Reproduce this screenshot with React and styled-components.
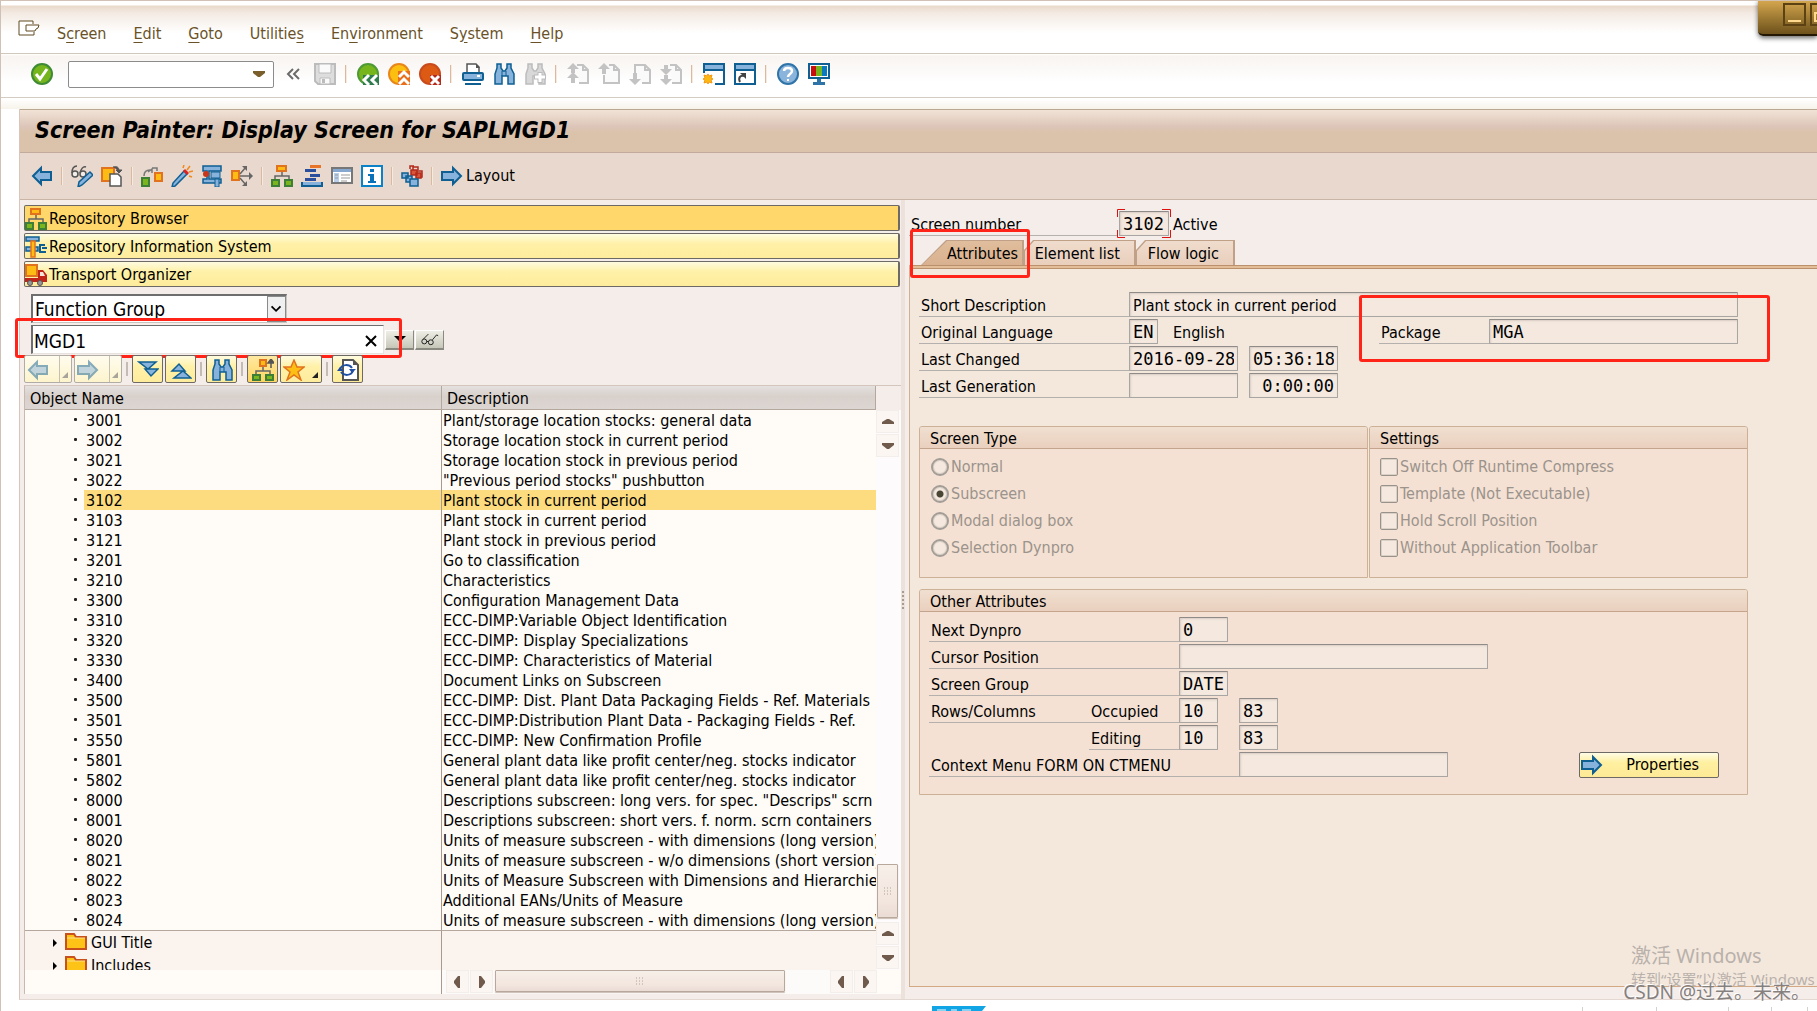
import React from 'react';
import styled, { createGlobalStyle, css } from 'styled-components';

const sans = '"DejaVu Sans Condensed", "DejaVu Sans", "Noto Sans CJK SC", sans-serif';
const mono = '"DejaVu Sans Mono", "Liberation Mono", monospace';
const cjk = '"Noto Sans", "Noto Sans CJK SC", sans-serif';

const GlobalStyle = createGlobalStyle`
  *, *::before, *::after {
    box-sizing: border-box;
  }
  html, body, #root {
    height: 100%;
  }
  body {
    margin: 0;
    overflow: hidden;
    background: #fff;
    color: #000;
    font-family: ${sans};
    font-size: 16px;
    line-height: 20px;
  }
  button, input, select {
    font: inherit;
    color: inherit;
    margin: 0;
    border-radius: 0;
  }
  h1, h2, ul {
    margin: 0;
    padding: 0;
    font: inherit;
  }
  ul {
    list-style: none;
  }
`;

/* ---------- icons ---------- */

const Svg = styled.svg`
  display: block;
  flex: none;
  width: ${({ $w }) => $w || 22}px;
  height: ${({ $h }) => $h || 22}px;
`;

const blue = { fill: '#86b2dc', stroke: '#0f5f92', strokeWidth: 2 };
const green = { fill: '#7ab51d', stroke: '#3d7f37', strokeWidth: 2 };
const orange = { fill: '#fdbb14', stroke: '#e2731e', strokeWidth: 2 };
const pale = { fill: '#c3c3c3' };
const disabledPage = { fill: '#fafafa', stroke: '#c3c3c3', strokeWidth: 2 };

const icons = {
  ok: (
    <>
      <circle cx="11" cy="11" r="10" fill="#76b51b" stroke="#3f8a34" strokeWidth="2" />
      <path d="M5 11l4 5 7-10" fill="none" stroke="#fff" strokeWidth="3" />
    </>
  ),
  history: <path d="M10 6l-5 5 5 5M16 6l-5 5 5 5" fill="none" stroke="#6b6b6b" strokeWidth="2" />,
  save: (
    <>
      <path d="M1 1h20v20H4l-3-3z" fill="#ddd" stroke="#bcbcbc" strokeWidth="2" />
      <path d="M5 1h12v9H5zM6 15h10v6H6z" fill="#fafafa" stroke="#bcbcbc" strokeWidth="1" />
      <path d="M8 16h3v4H8z" fill="#bcbcbc" />
    </>
  ),
  back: (
    <>
      <circle cx="11" cy="11" r="10" fill="#76b51b" stroke="#4f9a35" strokeWidth="2" />
      <path d="M6 12h16v10H6z" fill="#2f7d4c" />
      <path d="M12 12l-5 5 5 5M20 12l-5 5 5 5" fill="none" stroke="#fff" strokeWidth="3" />
    </>
  ),
  exit: (
    <>
      <circle cx="11" cy="11" r="10" fill="#fdbf0f" stroke="#e9861b" strokeWidth="2" />
      <path d="M10 8h12v14H10z" fill="#e9701b" />
      <path d="M11 14l5-5 5 5M11 21l5-5 5 5" fill="none" stroke="#fff" strokeWidth="3" />
    </>
  ),
  cancel: (
    <>
      <circle cx="11" cy="11" r="10" fill="#dc5a14" stroke="#c94a1c" strokeWidth="2" />
      <path d="M11 12h11v10H11z" fill="#b32a1b" />
      <path d="M12 13l8 8M20 13l-8 8" stroke="#fff" strokeWidth="3" />
    </>
  ),
  print: (
    <>
      <path d="M5 9V1h9l3 3v5" fill="#fff" stroke="#555" strokeWidth="1.5" />
      <path d="M14 1v4h4z" fill="#555" />
      <rect x="1" y="10" width="20" height="7" rx="1" {...blue} />
      <path d="M15 13h3" stroke="#fff" strokeWidth="2" />
      <path d="M3 20h16v2H3z" fill="#0f5f92" />
    </>
  ),
  find: (
    <>
      <path d="M4 1h4v4l2 3h2l2-3V1h4v4l3 6v10h-6v-8H9v8H2V11l2-6z" {...blue} strokeWidth="1.5" />
      <path d="M9 8v5M13 8v5" stroke="#0f5f92" strokeWidth="1" />
    </>
  ),
  findNext: (
    <>
      <path d="M4 1h4v4l2 3h2l2-3V1h4v4l3 6v10h-6v-8H9v8H2V11l2-6z" fill="#d8d8d8" stroke="#bcbcbc" strokeWidth="1.5" />
      <path d="M16 9v11M10 14h12" stroke="#bcbcbc" strokeWidth="5" />
      <path d="M16 10v9M11 14h10" stroke="#fff" strokeWidth="3" />
    </>
  ),
  pageFirst: (
    <>
      <path d="M10 2h6l5 5v13H12M16 2v5h5" {...disabledPage} />
      <path d="M6 0l6 6H8v4H4V6H0zM6 9l6 6H8v5H4v-5H0z" {...pale} />
    </>
  ),
  pageUp: (
    <>
      <path d="M11 2h5l5 5v13H6v-8M16 2v5h5" {...disabledPage} />
      <path d="M6 0l6 6H8v5H4V6H0z" {...pale} />
    </>
  ),
  pageDown: (
    <>
      <path d="M6 11V2h10l5 5v13h-8M16 2v5h5" {...disabledPage} />
      <path d="M6 22l6-6H8v-6H4v6H0z" {...pale} />
    </>
  ),
  pageLast: (
    <>
      <path d="M10 2h6l5 5v13H12M16 2v5h5" {...disabledPage} />
      <path d="M4 2h4v4h4l-6 6-6-6h4zM4 12h4v4h4l-6 6-6-6h4z" {...pale} />
    </>
  ),
  newMode: (
    <>
      <path d="M1 1h20v20H12M1 8v2" fill="#fff" stroke="#0f5f92" strokeWidth="2" />
      <rect x="1" y="1" width="20" height="6" {...blue} />
      <path d="M5 11l1 2 3-1-1 3 2 1-2 1 1 3-3-1-1 2-1-2-3 1 1-3-2-1 2-1-1-3 3 1z" fill="#fdb913" stroke="#f39a12" strokeWidth="1" />
    </>
  ),
  shortcut: (
    <>
      <rect x="1" y="1" width="20" height="20" fill="#fff" stroke="#0f5f92" strokeWidth="2" />
      <rect x="1" y="1" width="20" height="6" {...blue} />
      <path d="M6 19c-2-4 0-7 4-6" fill="none" stroke="#444" strokeWidth="2" />
      <path d="M6 10h6v6z" fill="#444" />
    </>
  ),
  help: (
    <>
      <circle cx="11" cy="11" r="10" fill="#8ab4dc" stroke="#2f74a8" strokeWidth="2" />
      <path d="M7 8c0-4 8-4 8 0 0 3-4 3-4 6" fill="none" stroke="#fff" strokeWidth="2.5" />
      <path d="M10 16h2v2h-2z" fill="#fff" />
    </>
  ),
  monitor: (
    <>
      <rect x="1" y="1" width="20" height="14" fill="#fff" stroke="#0f5f92" strokeWidth="2" />
      <path d="M3 3h5v10H3z" fill="#c80f0f" />
      <path d="M8 3h6v10H8z" fill="#76b51b" />
      <path d="M14 3h5v10h-5z" fill="#0a7ac0" />
      <path d="M9 16h4v3h4v3H5v-3h4z" fill="#2f74a8" />
    </>
  ),
  arrowLeft: <path d="M2 11l8-8v4h10v8H10v4z" {...blue} />,
  arrowRight: <path d="M20 11l-8-8v4H1v8h11v4z" {...blue} />,
  display: (
    <>
      <path d="M1 8c0-5 2-7 5-7M9 8c1-4 3-7 6-6" fill="none" stroke="#555" strokeWidth="1.5" />
      <circle cx="4" cy="9" r="3" fill="#f4ece6" stroke="#555" strokeWidth="1.5" />
      <circle cx="12" cy="9" r="3" fill="#f4ece6" stroke="#555" strokeWidth="1.5" />
      <path d="M19 7l3 3-11 10-4 2 1-5z" {...blue} strokeWidth="1.5" />
    </>
  ),
  other: (
    <>
      <path d="M1 3h12v13H1z" {...orange} />
      <path d="M9 9h8l3 3v9H9z" fill="#fff" stroke="#555" strokeWidth="1.5" />
      <path d="M12 2c4-1 6 0 6 4M15 5h6l-3 3z" fill="#555" stroke="#555" strokeWidth="1" />
    </>
  ),
  activate: (
    <>
      <path d="M3 11c0-4 2-6 6-6M7 7l4-3v4M11 3h5v3" fill="none" stroke="#777" strokeWidth="1.5" />
      <path d="M1 13h7v8H1z" {...green} />
      <path d="M14 8h7v8h-7z" {...orange} />
    </>
  ),
  wand: (
    <>
      <path d="M13 6l3 3L4 21l-3 1 1-4z" {...blue} strokeWidth="1.5" />
      <path d="M12 6l4 4 2-2-4-4z" fill="#d22" />
      <path d="M16 5l3-4M18 7l4-1M12 3l1-3M18 11l3 1" stroke="#f08a1a" strokeWidth="1.5" />
    </>
  ),
  whereUsed: (
    <>
      <path d="M2 1h18v5H8v8h12v4H2v-4h4V6H2z" {...blue} strokeWidth="1.5" />
      <path d="M14 14h4v8h-4z" fill="#86b2dc" stroke="#0f5f92" />
      <path d="M10 7h9v6h-9z" fill="#86b2dc" stroke="#0f5f92" />
      <circle cx="5" cy="9" r="3" fill="#c8371b" />
    </>
  ),
  spread: (
    <>
      <path d="M1 6h7v9H1z" {...orange} />
      <path d="M9 11h11M9 9l6-7M9 13l6 7" stroke="#666" strokeWidth="1.5" />
      <path d="M18 7l4 4-4 4zM11 1h5v5zM11 21h5v-5z" fill="#666" />
    </>
  ),
  tree: (
    <>
      <path d="M11 7v4M4 14v-3h14v3" fill="none" stroke="#666" strokeWidth="1.5" />
      <path d="M6 1h9v5H6z" {...orange} />
      <path d="M1 15h7v6H1zM14 15h7v6h-7z" {...green} />
    </>
  ),
  list: (
    <>
      <path d="M9 0h11v3H9z" fill="#e8742a" />
      <path d="M4 4h11v3H4zM9 9h10v3H9zM4 13h11v3H4z" fill="#2b4f9c" />
      <path d="M1 17v4h20v-4" fill="#86b2dc" stroke="#0f5f92" strokeWidth="2" />
    </>
  ),
  screen: (
    <>
      <rect x="1" y="3" width="20" height="15" fill="#fff" stroke="#777" strokeWidth="2" />
      <path d="M2 4h18v3H2z" fill="#86a8d0" />
      <path d="M3 8h5v9H3z" fill="#b8d0ea" />
      <path d="M10 10h9M10 13h9M10 16h6M4 10h3M4 13h3" stroke="#999" strokeWidth="1" />
    </>
  ),
  info: (
    <>
      <rect x="1" y="1" width="20" height="20" fill="#fff" stroke="#0a82c8" strokeWidth="2" />
      <path d="M9 4h4v3H9zM7 9h6v7h2v2H7v-2h2v-5H7z" fill="#0a72b8" />
    </>
  ),
  cubes: (
    <>
      <path d="M15 6h6v6h-4M12 5V2h5v3M9 4V1h4" fill="none" stroke="#b32a1b" strokeWidth="1.5" />
      <path d="M10 5h6v5h-6zM15 8h5v5h-5z" fill="#d8543a" stroke="#b32a1b" strokeWidth="1.5" />
      <path d="M1 8h6v5H1zM5 11h6v6H5z" {...blue} strokeWidth="1.5" />
      <path d="M9 14h8v7H9z" {...blue} strokeWidth="1.5" />
    </>
  ),
  tools: (
    <>
      <path d="M1 1h13v4H1zM1 11h12v4H1z" {...blue} strokeWidth="1.5" />
      <path d="M20 9h-5v7h6M17 12h5" fill="none" stroke="#0f5f92" strokeWidth="2" />
      <path d="M6 5h4v16H6z" {...orange} strokeWidth="1.5" />
    </>
  ),
  truck: (
    <>
      <path d="M1 1h11v11H1z" {...orange} />
      <path d="M0 14h13V6h5l4 5v7H0z" fill="#c02418" />
      <path d="M15 8h3l2 4h-5z" fill="#f4e4dc" />
      <circle cx="5" cy="19" r="2.5" fill="#999" stroke="#555" />
      <circle cx="15" cy="19" r="2.5" fill="#999" stroke="#555" />
    </>
  ),
  expand: <path d="M2 3h17l-8 7zM8 10h13l-7 7z" {...blue} strokeWidth="1.5" />,
  collapse: <path d="M2 12h13L9 5zM4 19h17l-8-7z" {...blue} strokeWidth="1.5" />,
  treeUp: (
    <>
      <path d="M11 8v4M4 15v-3h14v3" fill="none" stroke="#666" strokeWidth="1.5" />
      <path d="M8 1h6v6H8z" {...orange} />
      <path d="M1 16h7v5H1zM14 16h7v5h-7z" {...green} />
      <path d="M19 9V3M16 4l3-4 3 4z" stroke="#555" strokeWidth="1.5" fill="#555" />
    </>
  ),
  star: <path d="M11 1l3 7h7l-6 5 3 8-7-5-7 5 3-8-6-5h7z" fill="#fdbf14" stroke="#e2731e" strokeWidth="1.5" />,
  refresh: (
    <>
      <path d="M6 1h10l5 5v15H6z" fill="#fff" stroke="#555" strokeWidth="2" />
      <path d="M16 1v5h5z" fill="#555" />
      <path d="M3 10c2-5 9-5 12-1M16 12c-2 5-9 5-12 1" fill="none" stroke="#1f4fa0" strokeWidth="2" />
      <path d="M12 10h7l-4 4zM0 12h7L3 8z" fill="#1f4fa0" />
    </>
  ),
  folder: (
    <>
      <path d="M1 17V2h8l2 3h10v12z" fill="#fdc417" stroke="#c8501a" strokeWidth="2" />
      <path d="M2 6h18" stroke="#fde08a" strokeWidth="1" />
    </>
  ),
  window: <path d="M15 4V1H1v14h15v-3M21 5H8v6h9l1-2 2-1 1-3z" fill="#fff" stroke="#5f4a20" strokeWidth="1" />,
  glasses: (
    <>
      <circle cx="4" cy="14" r="3" fill="none" stroke="#000" />
      <circle cx="12" cy="15" r="3" fill="none" stroke="#000" />
      <path d="M3 11l6-6M14 12l5-6 2 1M7 14h2" fill="none" stroke="#000" />
    </>
  )
};

function Icon ({ name, w = 22, h = 22 }) {
  return <Svg $w={w} $h={h} viewBox="0 0 22 22" aria-hidden="true">{icons[name]}</Svg>;
}

/* ---------- top of the window ---------- */

const Page = styled.div`
  position: relative;
  display: flex;
  flex-direction: column;
  height: 100%;
  overflow: hidden;
  border-top: 1px solid #d2c2b6;
  border-left: 1px solid #cfc0b8;
  background: #fff;
`;

const MenuBar = styled.nav`
  display: flex;
  align-items: center;
  gap: 17px;
  height: 53px;
  padding: 13px 0 0 17px;
  border-bottom: 1px solid #cfc9bd;
  background: linear-gradient(#fff 0, #fff 4px, #ead9cb 5px, #f3eae2 12px, #fff 32px);
`;

const MenuList = styled.ul`
  display: flex;
  gap: 27px;
`;

const MenuItem = styled.button`
  display: block;
  padding: 0;
  border: 0;
  background: none;
  color: #6a5228;

  u {
    text-underline-offset: 3px;
  }
`;

const MenuIcon = styled.span`
  padding-bottom: 6px;
`;

const menus = [
  ['S', 'c', 'reen'],
  ['', 'E', 'dit'],
  ['', 'G', 'oto'],
  ['Utilitie', 's', ''],
  ['En', 'v', 'ironment'],
  ['S', 'y', 'stem'],
  ['', 'H', 'elp']
];

const Toolbar = styled.div`
  display: flex;
  align-items: center;
  gap: ${({ $gap }) => $gap}px;
`;

const MainToolbar = styled(Toolbar)`
  height: 44px;
  padding: 0 0 3px 30px;
  border-bottom: 1px solid #d2ccc2;
  background: linear-gradient(#fff 0, #f8f4f1 2px, #fff 28px);
`;

const IconButton = styled.button`
  display: flex;
  align-items: center;
  gap: 3px;
  padding: 0;
  border: 0;
  background: none;
`;

const Separator = styled.span`
  width: 2px;
  height: 18px;
  margin-right: ${({ $wide }) => ($wide ? 1 : 0)}px;
  border-left: 1px solid #dbb8a0;
  border-right: 1px solid #f6eadc;
`;

const Command = styled.div`
  display: flex;
  align-items: center;
  width: 206px;
  height: 27px;
  margin-left: 6px;
  padding-right: 8px;
  border: 1px solid #8c8c8c;
  border-radius: 2px;
  background: #fff;

  input {
    flex: 1;
    min-width: 0;
    border: 0;
    outline: 0;
    background: none;
  }
`;

function Tools ({ names, wide }) {
  return names.map((name, i) => (
    name === '|'
      ? <Separator key={i} $wide={wide} />
      : <IconButton key={i} aria-label={name}><Icon name={name} /></IconButton>
  ));
}

const mainTools = ['history', 'save', '|', 'back', 'exit', 'cancel', '|', 'print', 'find', 'findNext', '|',
  'pageFirst', 'pageUp', 'pageDown', 'pageLast', '|', 'newMode', 'shortcut', '|', 'help', 'monitor'];

const appTools = ['arrowLeft', '|', 'display', 'other', '|', 'activate', 'wand', 'whereUsed', 'spread', '|',
  'tree', 'list', 'screen', 'info', '|', 'cubes', '|'];

const WindowControls = styled.div`
  position: absolute;
  top: -1px;
  right: 0;
  display: flex;
  gap: 4px;
  width: 59px;
  height: 36px;
  padding: 3px 0 0 25px;
  overflow: hidden;
  border-bottom: 2px solid #241804;
  border-radius: 0 0 0 5px;
  background: linear-gradient(#d8a850, #a07c34 50%, #6e521c);
  box-shadow: 0 2px 5px rgba(0, 0, 0, .6);

  button {
    flex: none;
    width: 23px;
    height: 23px;
    padding: 0;
    border: 2px solid #5c4212;
    background: none;
  }
`;

/* ---------- frame ---------- */

const Frame = styled.main`
  flex: 1;
  min-height: 0;
  display: flex;
  flex-direction: column;
  margin: 0 0 11px 18px;
  border-left: 1px solid #d8c6ba;
  border-bottom: 1px solid #e4d8d2;
  background: #f5edea;
`;

const Gap = styled.div`
  height: 11px;
  background: linear-gradient(#fff 1px, #f7f3ea);
`;

const TitleBar = styled.h1`
  height: 44px;
  padding-left: 15px;
  border-top: 1px solid #b9a892;
  border-bottom: 1px solid #c2ab9c;
  background: linear-gradient(#f1e3d6, #dcc5b8 40%, #dbc2aa 55%, #dbc2aa);
  font-size: 23px;
  font-weight: bold;
  font-style: italic;
  line-height: 40px;
`;

const AppToolbar = styled(Toolbar)`
  height: 47px;
  padding-left: 11px;
  border-bottom: 1px solid #c9b4a6;
  background: #e8d8ce;
`;

const Columns = styled.div`
  flex: 1;
  min-height: 0;
  display: grid;
  grid-template-columns: minmax(0, 881fr) 4px minmax(0, 912fr);
`;

const Splitter = styled.div`
  display: flex;
  align-items: center;
  justify-content: center;
  background: #ede2db;

  &::before {
    content: '';
    height: 18px;
    border-left: 2px dotted #a89c90;
  }
`;

/* ---------- left side: object navigator ---------- */

const Navigator = styled.section`
  display: flex;
  flex-direction: column;
  min-width: 0;
  min-height: 0;
  padding: 5px 0 5px 4px;
`;

const Areas = styled.div`
  display: grid;
  gap: 2px;
  padding-right: 1px;
`;

const AreaButton = styled.button`
  display: flex;
  align-items: center;
  gap: 2px;
  height: 26px;
  padding: 1px 0 0;
  border: 1px solid #6d6a66;
  border-width: 1px 2px 1px 1px;
  border-radius: 2px;
  background: ${({ $active }) => ($active ? '#ffd76a' : 'linear-gradient(#fffbe0, #fff1a8 40%, #feec9c)')};
  text-align: left;
`;

const Finder = styled.div`
  position: relative;
  display: grid;
  gap: 2px;
  padding: 7px 0 1px 7px;
`;

const SelectBox = styled.div`
  position: relative;
  width: 256px;
  height: 29px;
  border: 1px solid #c8c4c0;
  border-top: 2px solid #6e6e6e;
  border-left: 2px solid #6e6e6e;
  background: #fff;

  select {
    width: 100%;
    height: 26px;
    padding: 0 0 0 2px;
    border: 0;
    background: none;
    appearance: none;
    font-size: 19px;
    line-height: 26px;
  }
  svg {
    position: absolute;
    top: 0;
    right: 0;
    width: 19px;
    height: 26px;
    border: 1px solid #8a8a8a;
    background: #f0f0f0;
    pointer-events: none;
  }
`;

const ObjectRow = styled.div`
  display: flex;
  align-items: center;
  gap: 1px;
`;

const ObjectBox = styled.div`
  display: flex;
  align-items: center;
  width: 353px;
  height: 29px;
  padding: 2px 5px 0 0;
  border: 1px solid #e6e2de;
  border-top: 1px solid #6e6e6e;
  border-left: 2px solid #6e6e6e;
  background: #fff;

  input {
    flex: 1;
    min-width: 0;
    padding: 0 1px;
    border: 0;
    outline: 0;
    background: none;
    font-size: 19px;
  }
  button {
    padding: 0;
    border: 0;
    background: none;
  }
`;

const GrayButton = styled.button`
  display: flex;
  align-items: center;
  justify-content: center;
  width: 29px;
  height: 20px;
  padding: 0;
  border: 1px solid #fff;
  border-right: 1px solid #8a8a80;
  border-bottom: 2px solid #8a8a80;
  background: linear-gradient(#eeeee6, #c6c6b8);
`;

const Mark = styled.div`
  position: absolute;
  border: 3px solid #ff2318;
  border-radius: 3px;
  pointer-events: none;
`;

const FinderMark = styled(Mark)`
  top: 31px;
  left: -9px;
  width: 387px;
  height: 40px;
`;

const TreeToolbar = styled.div`
  display: flex;
  align-items: flex-end;
  gap: 2px;
  height: 28px;
`;

const TreeButton = styled.button`
  display: flex;
  align-items: center;
  justify-content: ${({ $menu }) => ($menu ? 'flex-start' : 'center')};
  position: relative;
  width: ${({ $menu }) => $menu || 31}px;
  height: 28px;
  padding: 1px ${({ $menu }) => ($menu ? 2 : 3)}px 0;
  border: 1px solid #6d6a66;
  border-radius: 2px;
  background: ${({ $active }) => ($active
    ? 'linear-gradient(#ffe9a0, #ffd562)'
    : 'linear-gradient(#fffbe0, #fff1a8 40%, #feec9c)')};

  &:disabled {
    border-color: #b0aca6;
    background: linear-gradient(90deg, transparent 34px, #c4c0b4 34px, #c4c0b4 35px, transparent 35px),
      linear-gradient(#fffcee, #fdf4cc);
  }
  &:disabled svg {
    opacity: .5;
  }
  ${({ $menu }) => $menu && css`
    &::after {
      content: '';
      position: absolute;
      right: 3px;
      bottom: 4px;
      border: 3px solid;
      border-color: transparent #222 #222 transparent;
    }
    &:disabled::after {
      border-color: transparent #a8a49c #a8a49c transparent;
    }
  `}
`;

const TreeSeparator = styled.span`
  width: 2px;
  height: 14px;
  margin: 0 2px 7px;
  background: #c4bcb4;
`;

const TreeBox = styled.div`
  flex: 1;
  min-height: 0;
  display: grid;
  grid-template-columns: minmax(0, 1fr) 25px;
  grid-template-rows: minmax(0, 1fr) 24px;
  margin-top: 2px;
  border-top: 1px solid #d4c6bc;
  border-left: 1px solid #c8bab0;
`;

const TreeClip = styled.div`
  overflow: hidden;
  background: #fbf3ee;
`;

const Tree = styled.table`
  width: 100%;
  border-collapse: separate;
  border-spacing: 0;
  table-layout: fixed;

  th {
    height: 24px;
    padding: 2px 5px 0;
    border-right: 1px solid #b4a89e;
    border-bottom: 1px solid #b4a89e;
    background: linear-gradient(#e4e1df, #d8d0cb 45%, #dcd6d2);
    font-weight: normal;
    line-height: 20px;
    text-align: left;
  }
  td {
    height: 20px;
    padding: 2px 0 0 1px;
    overflow: hidden;
    line-height: 18px;
    white-space: nowrap;
  }
  td:first-child {
    border-right: 1px solid #a89a90;
  }
`;

const NameColumn = styled.col`
  width: 417px;
`;

const ScreenRow = styled.tr`
  background: #fffbf6;

  td {
    background: ${({ $active }) => ($active ? '#fddc80' : 'none')};
  }
  td:first-child {
    padding-left: 49px;
    background: ${({ $active }) => ($active
    ? 'linear-gradient(90deg, #fffbf6 59px, #fddc80 59px)'
    : 'none')};
  }
  td:first-child::before {
    content: '';
    display: inline-block;
    width: 3px;
    height: 3px;
    margin-right: 9px;
    vertical-align: 5px;
    border-radius: 1px;
    background: #222;
  }
`;

const FolderRow = styled.tr`
  && td {
    height: 24px;
    padding-top: 0;
    border-top: ${({ $first }) => ($first ? '1px solid #b4a89e' : '0')};
  }
`;

const Folder = styled.span`
  display: flex;
  align-items: center;
  gap: 4px;
  padding-left: 27px;

  &::before {
    content: '';
    margin-right: 4px;
    border: 4px solid transparent;
    border-left-color: #000;
    border-right: 0;
  }
`;

const ScrollBar = styled.div`
  display: flex;
  gap: 1px;
  background: #fdfbfa;
`;

const VerticalBar = styled(ScrollBar)`
  flex-direction: column;
  padding: 24px 0 1px;
  background: linear-gradient(#f5edea 24px, #fdfbfb 24px);
`;

const ScrollButton = styled.button`
  display: flex;
  flex: none;
  align-items: center;
  justify-content: center;
  width: 23px;
  height: 23px;
  padding: 0;
  border: 1px solid #f4eeea;
  background: #fbf6f2;
`;

const Spacer = styled.span`
  flex: ${({ $grow }) => $grow || 1};
`;

const Thumb = styled.div`
  flex: ${({ $grow }) => $grow || 'none'};
  display: flex;
  align-items: center;
  justify-content: center;
  width: ${({ $grow }) => ($grow ? 'auto' : '21px')};
  height: ${({ $grow }) => ($grow ? '22px' : '54px')};
  margin: 0 1px;
  border: 1px solid #b8a89c;
  border-radius: 1px;
  background: linear-gradient(#f7efe9, #f3e6de 70%, #eadcd4);
  box-shadow: 0 1px 1px #cbbdb4;
`;

const BottomBar = styled.div`
  grid-column: 1 / 3;
  display: grid;
  grid-template-columns: 416px 1fr;
  background: #fffbf6;
`;

const HorizontalBar = styled(ScrollBar)`
  margin-right: 24px;
  padding-left: 4px;
  border-left: 1px solid #a89a90;
`;

const arrows = {
  up: 'M5 13h12v-2l-5-3h-2l-5 3z',
  down: 'M5 8h12v2l-5 4h-2l-5-4z',
  left: 'M13 5v12h-2l-4-5v-2l4-5z',
  right: 'M8 5v12h2l4-5v-2l-4-5z'
};

function Scroll ({ dir }) {
  return (
    <ScrollButton aria-label={`scroll ${dir}`}>
      <Svg viewBox="0 0 22 22"><path d={arrows[dir]} fill="#705a4c" /></Svg>
    </ScrollButton>
  );
}

function Grip () {
  return (
    <Svg $w={8} $h={8} viewBox="0 0 8 8">
      <path d="M0 1h8M0 4h8M0 7h8" stroke="#b0a298" strokeWidth="1" strokeDasharray="1 2" />
    </Svg>
  );
}

const screens = [
  ['3001', 'Plant/storage location stocks: general data'],
  ['3002', 'Storage location stock in current period'],
  ['3021', 'Storage location stock in previous period'],
  ['3022', '"Previous period stocks" pushbutton'],
  ['3102', 'Plant stock in current period'],
  ['3103', 'Plant stock in current period'],
  ['3121', 'Plant stock in previous period'],
  ['3201', 'Go to classification'],
  ['3210', 'Characteristics'],
  ['3300', 'Configuration Management Data'],
  ['3310', 'ECC-DIMP:Variable Object Identification'],
  ['3320', 'ECC-DIMP: Display Specializations'],
  ['3330', 'ECC-DIMP: Characteristics of Material'],
  ['3400', 'Document Links on Subscreen'],
  ['3500', 'ECC-DIMP: Dist. Plant Data Packaging Fields - Ref. Materials'],
  ['3501', 'ECC-DIMP:Distribution Plant Data - Packaging Fields - Ref.'],
  ['3550', 'ECC-DIMP: New Confirmation Profile'],
  ['5801', 'General plant data like profit center/neg. stocks indicator'],
  ['5802', 'General plant data like profit center/neg. stocks indicator'],
  ['8000', 'Descriptions subscreen: long vers. for spec. "Descrips" scrn'],
  ['8001', 'Descriptions subscreen: short vers. f. norm. scrn containers'],
  ['8020', 'Units of measure subscreen - with dimensions (long version)'],
  ['8021', 'Units of measure subscreen - w/o dimensions (short version)'],
  ['8022', 'Units of Measure Subscreen with Dimensions and Hierarchies'],
  ['8023', 'Additional EANs/Units of Measure'],
  ['8024', 'Units of measure subscreen - with dimensions (long version)']
];

function ObjectNavigator () {
  return (
    <Navigator>
      <Areas>
        <AreaButton $active><Icon name="tree" />Repository Browser</AreaButton>
        <AreaButton><Icon name="tools" />Repository Information System</AreaButton>
        <AreaButton><Icon name="truck" />Transport Organizer</AreaButton>
      </Areas>
      <Finder>
        <SelectBox>
          <select aria-label="Object type" defaultValue="fg">
            <option value="fg">Function Group</option>
          </select>
          <Svg viewBox="0 0 19 26"><path d="M4 10l5 5 5-5" fill="none" stroke="#000" strokeWidth="2" /></Svg>
        </SelectBox>
        <ObjectRow>
          <ObjectBox>
            <input aria-label="Object name" defaultValue="MGD1" />
            <button aria-label="Clear">
              <Svg $w={14} $h={14} viewBox="0 0 14 14"><path d="M2 2l10 10M12 2L2 12" stroke="#000" strokeWidth="2" /></Svg>
            </button>
          </ObjectBox>
          <GrayButton aria-label="History">
            <Svg $w={12} $h={6} viewBox="0 0 12 6"><path d="M0 0h12L6 6z" fill="#000" /></Svg>
          </GrayButton>
          <GrayButton aria-label="Display"><Icon name="glasses" w={18} h={18} /></GrayButton>
        </ObjectRow>
        <FinderMark />
      </Finder>
      <TreeToolbar>
        <TreeButton $menu={48} disabled aria-label="Back"><Icon name="arrowLeft" /></TreeButton>
        <TreeButton $menu={48} disabled aria-label="Forward"><Icon name="arrowRight" /></TreeButton>
        <TreeSeparator />
        <TreeButton aria-label="Expand"><Icon name="expand" /></TreeButton>
        <TreeButton aria-label="Collapse"><Icon name="collapse" /></TreeButton>
        <TreeSeparator />
        <TreeButton aria-label="Find"><Icon name="find" /></TreeButton>
        <TreeSeparator />
        <TreeButton $active aria-label="Superior object list"><Icon name="treeUp" /></TreeButton>
        <TreeButton $menu={42} aria-label="Favorites"><Icon name="star" /></TreeButton>
        <TreeSeparator />
        <TreeButton aria-label="Refresh"><Icon name="refresh" /></TreeButton>
      </TreeToolbar>
      <TreeBox>
        <TreeClip>
          <Tree>
            <colgroup><NameColumn /><col /></colgroup>
            <thead>
              <tr><th>Object Name</th><th>Description</th></tr>
            </thead>
            <tbody>
              {screens.map(([id, text]) => (
                <ScreenRow key={id} $active={id === '3102'}><td>{id}</td><td>{text}</td></ScreenRow>
              ))}
              <FolderRow $first><td><Folder><Icon name="folder" />GUI Title</Folder></td><td /></FolderRow>
              <FolderRow><td><Folder><Icon name="folder" />Includes</Folder></td><td /></FolderRow>
            </tbody>
          </Tree>
        </TreeClip>
        <VerticalBar>
          <Scroll dir="up" />
          <Scroll dir="down" />
          <Spacer />
          <Thumb><Grip /></Thumb>
          <Spacer $grow="0 0 2px" />
          <Scroll dir="up" />
          <Scroll dir="down" />
        </VerticalBar>
        <BottomBar>
          <span />
          <HorizontalBar>
            <Scroll dir="left" />
            <Scroll dir="right" />
            <Thumb $grow={291}><Grip /></Thumb>
            <Spacer $grow={42} />
            <Scroll dir="left" />
            <Scroll dir="right" />
          </HorizontalBar>
        </BottomBar>
      </TreeBox>
    </Navigator>
  );
}

/* ---------- right side: screen attributes ---------- */

const Details = styled.section`
  position: relative;
  display: flex;
  flex-direction: column;
  min-width: 0;
  padding: 8px 0 12px 4px;
`;

const Line = styled.div`
  display: flex;
  align-items: stretch;
  height: 25px;
  margin-bottom: 2px;
`;

const Label = styled.label`
  flex: none;
  width: ${({ $w }) => $w}px;
  padding: 2px 0 0 2px;
  border-bottom: 1px solid #b4b0ae;
  line-height: 24px;
  white-space: nowrap;
`;

const Field = styled.input`
  flex: none;
  width: ${({ $w }) => $w}px;
  height: 25px;
  margin-left: ${({ $gap }) => $gap || 0}px;
  padding: ${({ $text }) => ($text ? 2 : 0)}px 3px 0;
  border: 1px solid #a9a5a3;
  border-top-color: #8f8b89;
  border-radius: 1px;
  outline: 0;
  background: #f4e8df;
  box-shadow: inset 1px 1px 2px #d8ccc4;
  font-family: ${({ $text }) => ($text ? sans : mono)};
  font-size: ${({ $text }) => ($text ? 16 : 17)}px;
  text-align: ${({ $right }) => ($right ? 'right' : 'left')};
`;

const WideField = styled(Field)`
  flex: 1;
`;

const Note = styled.span`
  padding: 2px 0 0 ${({ $gap }) => $gap || 0}px;
  line-height: 24px;
`;

const Dynpro = styled(Line)`
  margin-top: 3px;
`;

const Focused = styled.span`
  position: relative;
  display: flex;
  margin-left: 2px;

  svg {
    position: absolute;
    top: -2px;
    left: -2px;
    width: 54px;
    height: 30px;
    pointer-events: none;
  }
`;

const Tabs = styled.div`
  display: flex;
  align-items: flex-end;
  height: 27px;
`;

const tabShapes = {
  long: 'polygon(0 100%, 12px 100%, 37px 0, 100% 0, 100% 100%)',
  short: 'polygon(0 100%, 0 10px, 9px 0, 100% 0, 100% 100%)'
};

const Tab = styled.button`
  position: relative;
  z-index: 0;
  width: ${({ $w }) => $w}px;
  height: 25px;
  padding: 3px ${({ $active }) => ($active ? 6 : 16)}px 0 0;
  border: 0;
  clip-path: ${({ $active }) => ($active ? tabShapes.long : tabShapes.short)};
  background: #c0a188;
  text-align: right;

  &::before {
    content: '';
    position: absolute;
    z-index: -1;
    inset: 1px 2px 0 1px;
    clip-path: ${({ $active }) => ($active ? tabShapes.long : tabShapes.short)};
    background: ${({ $active }) => ($active
    ? 'linear-gradient(#e0bd9c, #d9b190)'
    : 'linear-gradient(#f0dccd, #e9cfbc)')};
  }
`;

const Panel = styled.div`
  flex: 1;
  min-height: 0;
  border-left: 1px solid #cfb096;
  border-bottom: 1px solid #d3a984;
  background: #f4e8dd;

  &::before {
    content: '';
    display: block;
    height: 4px;
    border: 1px solid #bb906c;
    border-width: 1px 0;
    background: #e2bd98;
  }
`;

const PanelBody = styled.div`
  padding: 23px 69px 0 9px;
`;

const Spread = styled.div`
  display: flex;
  justify-content: space-between;
`;

const Head = styled.div`
  padding-right: 10px;
`;

const Groups = styled.div`
  display: grid;
  grid-template-columns: 449fr 379fr;
  gap: 11px 1px;
  margin-top: 28px;
`;

const Group = styled.section`
  grid-column: ${({ $full }) => ($full ? '1 / 3' : 'auto')};
  border: 1px solid #cdb196;
  border-radius: 3px 3px 0 0;
  background: #f4e1d3;
`;

const GroupTitle = styled.h2`
  height: 22px;
  padding-left: 10px;
  border-bottom: 1px solid #c4a48c;
  border-radius: 2px 2px 0 0;
  background: linear-gradient(#f0dfd0, #ead0be);
  line-height: 24px;
`;

const GroupBody = styled.div`
  padding: ${({ $pad }) => $pad};
`;

const Choice = styled.label`
  display: flex;
  align-items: center;
  gap: 2px;
  height: 27px;
  color: #9b938c;

  input {
    appearance: none;
    flex: none;
    width: 18px;
    height: 18px;
    border: 1px solid #98928c;
    border-radius: 2px;
    background: #f4e8df;
    box-shadow: inset 0 0 0 1px #dcd0c4;
  }
  input[type='radio'] {
    border: 2px solid #a39d97;
    border-radius: 50%;
  }
  input[type='radio']:checked {
    background: radial-gradient(#4a4634 3px, #f4e8df 4px);
  }
`;

const Indent = styled.span`
  flex: none;
  width: 160px;
`;

const PropertiesButton = styled.button`
  display: flex;
  align-items: center;
  justify-content: space-between;
  width: 140px;
  height: 26px;
  margin-left: auto;
  padding: 0 19px 0 1px;
  border: 1px solid #6d6a66;
  border-radius: 2px;
  background: linear-gradient(#fffce6, #fff0a0 40%, #feea96);
`;

const TabMark = styled(Mark)`
  top: 29px;
  left: 5px;
  width: 120px;
  height: 49px;
`;

const PackageMark = styled(Mark)`
  top: 95px;
  right: 47px;
  width: 411px;
  height: 67px;
`;

function DynproLine () {
  return (
    <Dynpro>
      <Label htmlFor="dynnr" $w={208}>Screen number</Label>
      <Focused>
        <Field id="dynnr" $w={50} readOnly defaultValue="3102" />
        <svg viewBox="0 0 54 30">
          <path d="M8 .5H.5V8M45 .5h8.500V8M8 28.500H.5V21M45 28.500h8.500V21" fill="none" stroke="#e01010" strokeWidth="1" />
        </svg>
      </Focused>
      <Note $gap={4}>Active</Note>
    </Dynpro>
  );
}

function HeadLines () {
  return (
    <Head>
      <Line>
        <Label htmlFor="text" $w={210}>Short Description</Label>
        <WideField id="text" $text readOnly defaultValue="Plant stock in current period" />
      </Line>
      <Spread>
        <Line>
          <Label htmlFor="lang" $w={210}>Original Language</Label>
          <Field id="lang" $w={29} readOnly defaultValue="EN" />
          <Note $gap={15}>English</Note>
        </Line>
        <Line>
          <Label htmlFor="pack" $w={110}>Package</Label>
          <Field id="pack" $w={249} readOnly defaultValue="MGA" />
        </Line>
      </Spread>
      <Line>
        <Label htmlFor="changed" $w={210}>Last Changed</Label>
        <Field id="changed" $w={109} readOnly defaultValue="2016-09-28" />
        <Field aria-label="Time changed" $w={89} $gap={11} $right readOnly defaultValue="05:36:18" />
      </Line>
      <Line>
        <Label htmlFor="generated" $w={210}>Last Generation</Label>
        <Field id="generated" $w={109} readOnly defaultValue="" />
        <Field aria-label="Time generated" $w={89} $gap={11} $right readOnly defaultValue="0:00:00" />
      </Line>
    </Head>
  );
}

function OtherAttributes () {
  return (
    <GroupBody $pad="5px 28px 15px 9px">
      <Line>
        <Label htmlFor="next" $w={250}>Next Dynpro</Label>
        <Field id="next" $w={49} readOnly defaultValue="0" />
      </Line>
      <Line>
        <Label htmlFor="cursor" $w={250}>Cursor Position</Label>
        <Field id="cursor" $w={309} readOnly defaultValue="" />
      </Line>
      <Line>
        <Label htmlFor="group" $w={250}>Screen Group</Label>
        <Field id="group" $w={49} readOnly defaultValue="DATE" />
      </Line>
      <Line>
        <Label as="span" $w={160}>Rows/Columns</Label>
        <Label htmlFor="occupied" $w={90}>Occupied</Label>
        <Field id="occupied" $w={39} readOnly defaultValue="10" />
        <Field aria-label="Occupied columns" $w={39} $gap={21} readOnly defaultValue="83" />
      </Line>
      <Line>
        <Indent />
        <Label htmlFor="editing" $w={90}>Editing</Label>
        <Field id="editing" $w={39} readOnly defaultValue="10" />
        <Field aria-label="Editing columns" $w={39} $gap={21} readOnly defaultValue="83" />
      </Line>
      <Line>
        <Label htmlFor="ctmenu" $w={310}>Context Menu FORM ON CTMENU</Label>
        <Field id="ctmenu" $w={209} readOnly defaultValue="" />
        <PropertiesButton><Icon name="arrowRight" />Properties</PropertiesButton>
      </Line>
    </GroupBody>
  );
}

const screenTypes = ['Normal', 'Subscreen', 'Modal dialog box', 'Selection Dynpro'];
const settings = ['Switch Off Runtime Compress', 'Template (Not Executable)', 'Hold Scroll Position', 'Without Application Toolbar'];

function ScreenDetails () {
  return (
    <Details>
      <DynproLine />
      <Tabs>
        <Tab $w={115} $active>Attributes</Tab>
        <Tab $w={112}>Element list</Tab>
        <Tab $w={99}>Flow logic</Tab>
      </Tabs>
      <Panel>
        <PanelBody>
          <HeadLines />
          <Groups>
            <Group>
              <GroupTitle>Screen Type</GroupTitle>
              <GroupBody $pad="4px 11px 16px">
                {screenTypes.map((type) => (
                  <Choice key={type}>
                    <input type="radio" name="type" disabled defaultChecked={type === 'Subscreen'} />{type}
                  </Choice>
                ))}
              </GroupBody>
            </Group>
            <Group>
              <GroupTitle>Settings</GroupTitle>
              <GroupBody $pad="4px 10px 16px">
                {settings.map((s) => <Choice key={s}><input type="checkbox" disabled />{s}</Choice>)}
              </GroupBody>
            </Group>
            <Group $full>
              <GroupTitle>Other Attributes</GroupTitle>
              <OtherAttributes />
            </Group>
          </Groups>
        </PanelBody>
      </Panel>
      <TabMark />
      <PackageMark />
    </Details>
  );
}

/* ---------- bottom edge ---------- */

const Watermark = styled.div`
  position: absolute;
  right: 0;
  bottom: 21px;
  width: 186px;
  color: #b9b1ab;
  font-family: ${cjk};
  font-size: 15px;
  line-height: 22px;
  white-space: nowrap;

  strong {
    display: block;
    font-size: 20px;
    font-weight: normal;
    line-height: 24px;
  }
`;

const Credit = styled.div`
  position: absolute;
  right: 7px;
  bottom: 6px;
  color: #85807e;
  font-family: ${cjk};
  font-size: 19px;
  line-height: 26px;
  white-space: nowrap;
  text-shadow: -1px -1px 0 #fff;
`;

const SapLogo = styled.svg`
  position: absolute;
  left: 51.25%;
  bottom: 0;
  width: 54px;
  height: 5px;
`;

const StatusMarks = styled.div`
  position: absolute;
  right: 9px;
  bottom: 0;
  display: grid;
  grid-template-columns: 74px 72px 43px 36px 1px;
  height: 4px;

  span {
    border-left: 1px solid #d4d0ce;
  }
`;

export default function App () {
  return (
    <Page>
      <GlobalStyle />
      <MenuBar>
        <MenuIcon><Icon name="window" /></MenuIcon>
        <MenuList>
          {menus.map(([a, key, b]) => (
            <li key={a + key + b}><MenuItem>{a}<u>{key}</u>{b}</MenuItem></li>
          ))}
        </MenuList>
      </MenuBar>
      <MainToolbar $gap={9}>
        <IconButton aria-label="Enter"><Icon name="ok" /></IconButton>
        <Command>
          <input aria-label="Command" />
          <Svg $w={12} $h={7} viewBox="0 0 12 7"><path d="M0 0h12v2L7 6H5L0 2z" fill="#7a5f2c" /></Svg>
        </Command>
        <Tools names={mainTools} wide />
      </MainToolbar>
      <Gap />
      <Frame>
        <TitleBar>Screen Painter: Display Screen for SAPLMGD1</TitleBar>
        <AppToolbar $gap={8}>
          <Tools names={appTools} />
          <IconButton><Icon name="arrowRight" />Layout</IconButton>
        </AppToolbar>
        <Columns>
          <ObjectNavigator />
          <Splitter />
          <ScreenDetails />
        </Columns>
      </Frame>
      <WindowControls>
        <button aria-label="Minimize">
          <Svg $w={19} $h={19} viewBox="0 0 19 19"><path d="M3 15h13v2H3z" fill="#ffd98c" /></Svg>
        </button>
        <button aria-label="Restore">
          <Svg $w={19} $h={19} viewBox="0 0 19 19"><path d="M3 8h9v8H3z" fill="none" stroke="#ffd98c" strokeWidth="2" /></Svg>
        </button>
      </WindowControls>
      <Watermark><strong>激活 Windows</strong>转到“设置”以激活 Windows</Watermark>
      <Credit>CSDN @过去。未来。</Credit>
      <SapLogo viewBox="0 0 54 5">
        <path d="M0 0h54l-4 5H0z" fill="#12a5e6" />
        <path d="M5 4h9M19 4h6M30 4h9" stroke="#fff" strokeWidth="1" />
      </SapLogo>
      <StatusMarks><span /><span /><span /><span /><span /></StatusMarks>
    </Page>
  );
}
